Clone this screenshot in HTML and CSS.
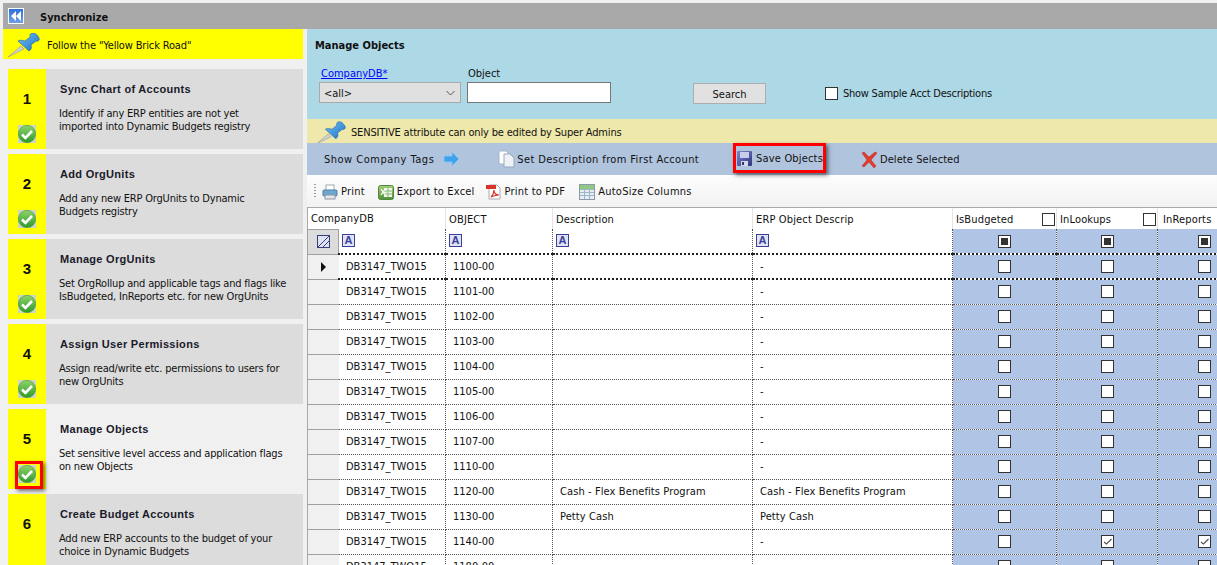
FILE: index.html
```html
<!DOCTYPE html>
<html lang="en">
<head>
<meta charset="utf-8">
<title>Synchronize</title>
<link rel="stylesheet" href="styles.css">
</head>
<body>
<svg class="defs" width="0" height="0" aria-hidden="true">
  <defs>
    <linearGradient id="gr" x1="0" y1="0" x2="0" y2="1"><stop offset="0" stop-color="#8fd46a"/><stop offset="1" stop-color="#2f9a2a"/></linearGradient>
    <linearGradient id="pinb" x1="0" y1="0" x2="1" y2="1"><stop offset="0" stop-color="#6fc3f5"/><stop offset="1" stop-color="#1d70c8"/></linearGradient>
    <linearGradient id="sv" x1="0" y1="0" x2="1" y2="1"><stop offset="0" stop-color="#7f86c8"/><stop offset="1" stop-color="#2c3584"/></linearGradient>
    <linearGradient id="xl" x1="0" y1="0" x2="0" y2="1"><stop offset="0" stop-color="#a6cf7e"/><stop offset="1" stop-color="#4e8f3a"/></linearGradient>
    <symbol id="check" viewBox="0 0 18 18">
      <rect width="18" height="18" fill="#c9d6c0"/>
      <circle cx="9" cy="9" r="8.6" fill="url(#gr)" stroke="#3b8f2e" stroke-width=".6"/>
      <path d="M4 9.500l3.400 3.400L14 6" fill="none" stroke="#fff" stroke-width="2.600"/>
    </symbol>
    <symbol id="pin" viewBox="0 0 32 24">
      <path d="M0 24L13 13l3 3z" fill="#d0d0d0" stroke="#8a8a8a" stroke-width=".5"/>
      <path d="M10 8l11 10c2-1 3-3 2-6l5-4c2 1 4-1 3-3s-3-5-6-5-3 2-3 4l-5 4c-3-1-6-1-7 0z" fill="url(#pinb)" stroke="#1b5fa8" stroke-width=".6"/>
    </symbol>
    <symbol id="tick" viewBox="0 0 11 11">
      <path d="M2 6l2.500 2L9.500 3" fill="none" stroke="#555" stroke-width="1.200"/>
    </symbol>
  </defs>
</svg>

<div class="app">
  <header class="titlebar">
    <span class="collapse"><svg width="12" height="10" viewBox="0 0 12 10"><path d="M6 0v10L1 5zM11 0v10L6 5z" fill="#fff"/></svg></span>
    <span class="title-text">Synchronize</span>
  </header>

  <div class="body-row">
    <aside class="sidebar">
      <div class="follow"><svg class="follow-pin" width="32" height="24"><use href="#pin"/></svg><span>Follow the "Yellow Brick Road"</span></div>
      <div class="steps">
        <section class="step">
          <div class="step-num"><b>1</b><svg class="ok" width="18" height="18"><use href="#check"/></svg></div>
          <div class="step-text"><h3>Sync Chart of Accounts</h3><p>Identify if any ERP entities are not yet<br>imported into Dynamic Budgets registry</p></div>
        </section>
        <section class="step">
          <div class="step-num"><b>2</b><svg class="ok" width="18" height="18"><use href="#check"/></svg></div>
          <div class="step-text"><h3>Add OrgUnits</h3><p>Add any new ERP OrgUnits to Dynamic<br>Budgets registry</p></div>
        </section>
        <section class="step">
          <div class="step-num"><b>3</b><svg class="ok" width="18" height="18"><use href="#check"/></svg></div>
          <div class="step-text"><h3>Manage OrgUnits</h3><p>Set OrgRollup and applicable tags and flags like<br>IsBudgeted, InReports etc. for new OrgUnits</p></div>
        </section>
        <section class="step">
          <div class="step-num"><b>4</b><svg class="ok" width="18" height="18"><use href="#check"/></svg></div>
          <div class="step-text"><h3>Assign User Permissions</h3><p>Assign read/write etc. permissions to users for<br>new OrgUnits</p></div>
        </section>
        <section class="step step-active">
          <div class="step-num"><b>5</b><svg class="ok" width="18" height="18"><use href="#check"/></svg><span class="redbox redbox-check"></span></div>
          <div class="step-text"><h3>Manage Objects</h3><p>Set sensitive level access and application flags<br>on new Objects</p></div>
        </section>
        <section class="step">
          <div class="step-num"><b>6</b></div>
          <div class="step-text"><h3>Create Budget Accounts</h3><p>Add new ERP accounts to the budget of your<br>choice in Dynamic Budgets</p></div>
        </section>
      </div>
    </aside>

    <main class="content">
      <div class="filters">
        <h2>Manage Objects</h2>
        <div class="filter-row">
          <div class="field field-db">
            <a class="link" href="#">CompanyDB*</a>
            <span class="select">&lt;all&gt;<svg width="9" height="6" viewBox="0 0 9 6"><path d="M.5 1L4.500 5 8.500 1" fill="none" stroke="#555" stroke-width="1"/></svg></span>
          </div>
          <div class="field field-obj">
            <label>Object</label>
            <span class="input"></span>
          </div>
          <button class="search" type="button">Search</button>
          <span class="sample"><span class="cb"></span><span class="sample-text">Show Sample Acct Descriptions</span></span>
        </div>
      </div>

      <div class="notice"><svg class="notice-pin" width="30" height="24"><use href="#pin"/></svg>SENSITIVE attribute can only be edited by Super Admins</div>

      <div class="actions">
        <span class="act act-tags">Show Company Tags<svg width="17" height="16" viewBox="0 0 17 16"><path d="M1 5h8V1l7 7-7 7v-4H1z" fill="#3fa2ec" stroke="#8cc8f2" stroke-width=".8"/></svg></span>
        <span class="act act-desc"><svg width="17" height="18" viewBox="0 0 17 18"><path d="M1 1h7l3 3v10H1z" fill="#fff" stroke="#a8b4c4"/><path d="M6 4h6l4 4v9H6z" fill="#eef2f7" stroke="#98a6b8"/></svg>Set Description from First Account</span>
        <span class="act act-save"><svg width="15" height="15" viewBox="0 0 15 15"><rect width="15" height="15" rx="1" fill="url(#sv)"/><rect x="3" y="1" width="9" height="6" fill="#c9cdea"/><rect x="4" y="10" width="7" height="5" fill="#d6d8e0"/><rect x="5" y="11" width="2" height="3" fill="#2c3584"/></svg>Save Objects<span class="redbox redbox-save"></span></span>
        <span class="act act-del"><svg width="17" height="17" viewBox="0 0 17 17"><path d="M1 2l2-1 5 5 6-5 2 1-6 7 5 6-2 2-5-6-5 5-2-1 5-6z" fill="#e23b2e" stroke="#b32a20" stroke-width=".5"/></svg>Delete Selected</span>
      </div>

      <div class="tools">
        <span class="grip"></span>
        <span class="tool tool-print"><svg width="16" height="16" viewBox="0 0 16 16"><rect x="4" y="1" width="8" height="6" fill="#fff" stroke="#9aa"/><rect x="1" y="6" width="14" height="6" rx="1" fill="#6ea6d2" stroke="#4a7ea8"/><rect x="3" y="11" width="10" height="4" fill="#e4e8ec" stroke="#8a969f"/></svg>Print</span>
        <span class="tool tool-excel"><svg width="16" height="16" viewBox="0 0 16 16"><rect x=".5" y="1.500" width="15" height="14" rx="2" fill="url(#xl)" stroke="#4f8a3c"/><rect x="6" y="4" width="8" height="9" fill="#eef6e6"/><path d="M6 7h8M6 10h8M10 4v9" stroke="#8ab878"/><path d="M3 5l4 6M7 5l-4 6" stroke="#fff" stroke-width="1.300"/></svg>Export to Excel</span>
        <span class="tool tool-pdf"><svg width="16" height="16" viewBox="0 0 16 16"><path d="M3 1h8l3 3v11H3z" fill="#fff" stroke="#aaa"/><rect x="0" y="1" width="10" height="4" fill="#d8322a"/><path d="M5 13c2-2 3-5 3-7 0 3 2 5 5 5-3 0-6 1-8 2z" fill="none" stroke="#d8322a" stroke-width="1.200"/></svg>Print to PDF</span>
        <span class="tool tool-auto"><svg width="16" height="16" viewBox="0 0 16 16"><rect x=".5" y=".5" width="15" height="15" fill="#e6eef4" stroke="#8a9aa8"/><rect x="1" y="1" width="14" height="4" fill="#8ccb78"/><path d="M5.500 1v14M10.500 1v14M1 5.500h14M1 8.500h14M1 11.500h14" stroke="#9fb6c6"/></svg>AutoSize Columns</span>
      </div>

      <div class="grid-wrap">
        <table class="grid">
          <colgroup>
            <col class="c-sel"><col class="c-db"><col class="c-obj"><col class="c-desc"><col class="c-erp"><col class="c-bud"><col class="c-look"><col class="c-rep">
          </colgroup>
          <thead>
            <tr class="head">
              <th colspan="2" class="h-first">CompanyDB</th>
              <th>OBJECT</th>
              <th>Description</th>
              <th>ERP Object Descrip</th>
              <th><span class="h-flex">IsBudgeted<span class="cb"></span></span></th>
              <th><span class="h-flex">InLookups<span class="cb"></span></span></th>
              <th class="h-last">InReports</th>
            </tr>
            <tr class="filter">
              <td class="sel sel-corner"><svg width="13" height="13" viewBox="0 0 13 13"><rect x=".5" y=".5" width="12" height="12" fill="#dfe2f0" stroke="#3a3f7a"/><path d="M1 12L12 1M6 12l6-6" stroke="#3a3f7a"/></svg></td>
              <td><span class="fa">A</span></td>
              <td><span class="fa">A</span></td>
              <td><span class="fa">A</span></td>
              <td><span class="fa">A</span></td>
              <td class="chk"><span class="cb cb-mixed"></span></td>
              <td class="chk"><span class="cb cb-mixed"></span></td>
              <td class="chk"><span class="cb cb-mixed"></span></td>
            </tr>
          </thead>
          <tbody>
            <tr class="current"><td class="sel"><span class="arrow"></span></td><td class="db">DB3147_TWO15</td><td class="ob">1100-00</td><td></td><td class="erp">-</td><td class="chk"><span class="cb"></span></td><td class="chk"><span class="cb"></span></td><td class="chk"><span class="cb"></span></td></tr>
            <tr><td class="sel"></td><td class="db">DB3147_TWO15</td><td class="ob">1101-00</td><td></td><td class="erp">-</td><td class="chk"><span class="cb"></span></td><td class="chk"><span class="cb"></span></td><td class="chk"><span class="cb"></span></td></tr>
            <tr><td class="sel"></td><td class="db">DB3147_TWO15</td><td class="ob">1102-00</td><td></td><td class="erp">-</td><td class="chk"><span class="cb"></span></td><td class="chk"><span class="cb"></span></td><td class="chk"><span class="cb"></span></td></tr>
            <tr><td class="sel"></td><td class="db">DB3147_TWO15</td><td class="ob">1103-00</td><td></td><td class="erp">-</td><td class="chk"><span class="cb"></span></td><td class="chk"><span class="cb"></span></td><td class="chk"><span class="cb"></span></td></tr>
            <tr><td class="sel"></td><td class="db">DB3147_TWO15</td><td class="ob">1104-00</td><td></td><td class="erp">-</td><td class="chk"><span class="cb"></span></td><td class="chk"><span class="cb"></span></td><td class="chk"><span class="cb"></span></td></tr>
            <tr><td class="sel"></td><td class="db">DB3147_TWO15</td><td class="ob">1105-00</td><td></td><td class="erp">-</td><td class="chk"><span class="cb"></span></td><td class="chk"><span class="cb"></span></td><td class="chk"><span class="cb"></span></td></tr>
            <tr><td class="sel"></td><td class="db">DB3147_TWO15</td><td class="ob">1106-00</td><td></td><td class="erp">-</td><td class="chk"><span class="cb"></span></td><td class="chk"><span class="cb"></span></td><td class="chk"><span class="cb"></span></td></tr>
            <tr><td class="sel"></td><td class="db">DB3147_TWO15</td><td class="ob">1107-00</td><td></td><td class="erp">-</td><td class="chk"><span class="cb"></span></td><td class="chk"><span class="cb"></span></td><td class="chk"><span class="cb"></span></td></tr>
            <tr><td class="sel"></td><td class="db">DB3147_TWO15</td><td class="ob">1110-00</td><td></td><td class="erp">-</td><td class="chk"><span class="cb"></span></td><td class="chk"><span class="cb"></span></td><td class="chk"><span class="cb"></span></td></tr>
            <tr><td class="sel"></td><td class="db">DB3147_TWO15</td><td class="ob">1120-00</td><td class="ds">Cash - Flex Benefits Program</td><td class="erp">Cash - Flex Benefits Program</td><td class="chk"><span class="cb"></span></td><td class="chk"><span class="cb"></span></td><td class="chk"><span class="cb"></span></td></tr>
            <tr><td class="sel"></td><td class="db">DB3147_TWO15</td><td class="ob">1130-00</td><td class="ds">Petty Cash</td><td class="erp">Petty Cash</td><td class="chk"><span class="cb"></span></td><td class="chk"><span class="cb"></span></td><td class="chk"><span class="cb"></span></td></tr>
            <tr><td class="sel"></td><td class="db">DB3147_TWO15</td><td class="ob">1140-00</td><td></td><td class="erp">-</td><td class="chk"><span class="cb"></span></td><td class="chk"><span class="cb cb-on"><svg width="11" height="11"><use href="#tick"/></svg></span></td><td class="chk"><span class="cb cb-on"><svg width="11" height="11"><use href="#tick"/></svg></span></td></tr>
            <tr><td class="sel"></td><td class="db">DB3147_TWO15</td><td class="ob">1180-00</td><td></td><td class="erp">-</td><td class="chk"><span class="cb"></span></td><td class="chk"><span class="cb"></span></td><td class="chk"><span class="cb"></span></td></tr>
          </tbody>
        </table>
      </div>
    </main>
  </div>
</div>
</body>
</html>
```

FILE: styles.css
```css
* { box-sizing: border-box; }
html, body { margin: 0; padding: 0; height: 565px; overflow: hidden; }
body {
  background: #f0f0f0;
  font-family: "DejaVu Sans Condensed", "DejaVu Sans", sans-serif;
  font-stretch: condensed;
  font-size: 11px;
  color: #111;
}
.defs { position: absolute; }
.app { padding: 3px 0 0 3px; height: 565px; display: flex; flex-direction: column; }

.titlebar { height: 26px; background: #a9a9a9; display: flex; align-items: center; padding-left: 5px; flex: none; }
.collapse { width: 16px; height: 16px; border: 1px solid #fff; background: linear-gradient(#2f6fd8, #6f9fe8); display: flex; align-items: center; justify-content: center; }
.title-text { margin-left: 16px; padding-top: 2px; font-weight: 700; font-size: 11px; color: #111; }

.body-row { display: flex; flex: 1; min-height: 0; }
.sidebar { width: 304px; flex: none; overflow: hidden; }
.follow { width: 300px; height: 30px; background: #ff0; display: flex; align-items: center; padding: 2px 0 0 5px; font-size: 11px; letter-spacing: -.15px; }
.follow-pin { margin: 0 7px 0 0; flex: none; }
.steps { display: flex; flex-direction: column; gap: 5px; padding: 10px 0 0 5px; width: 300px; }
.step { height: 80px; flex: none; background: #dcdcdc; display: flex; }
.step-active { background: #f0f0f0; }
.step-num { width: 38px; background: #ff0; position: relative; flex: none; text-align: center; padding-top: 21px; }
.step-num b { font: 700 15px/18px "Liberation Sans", sans-serif; }
.ok { position: absolute; left: 10px; top: 56px; }
.step-text { padding: 13px 0 0 13px; }
.step-text h3 { margin: 0 0 0 1px; font: 700 11px/14px "Liberation Sans", sans-serif; letter-spacing: .3px; color: #1a1a2a; }
.step-text p { margin: 11px 0 0; font-size: 11px; line-height: 13px; color: #111; letter-spacing: -.2px; }
.redbox { position: absolute; border: 3px solid #f00; box-shadow: 2px 2px 4px rgba(0,0,0,.55); }
.redbox-check { left: 7px; top: 52px; width: 28px; height: 28px; }
.redbox-save { left: 0; top: 0; width: 93px; height: 30px; }

.content { flex: 1; min-width: 0; display: flex; flex-direction: column; }
.filters { height: 90px; background: #add8e6; padding: 10px 0 0 8px; flex: none; }
.filters h2 { margin: 0; font-size: 11px; font-weight: 700; line-height: 14px; color: #111; }
.filter-row { display: flex; align-items: flex-start; margin-top: 13px; }
.field { display: flex; flex-direction: column; }
.field-db { width: 142px; margin-left: 4px; }
.field-obj { width: 144px; margin-left: 6px; }
.link { color: #00f; text-decoration: underline; line-height: 15px; margin-left: 2px; }
.field-obj label { line-height: 15px; margin-left: 1px; }
.select { height: 21px; margin-top: 1px; background: #e0e0e0; border: 1px solid #a9a9a9; display: flex; align-items: center; justify-content: space-between; padding: 1px 5px 0 4px; }
.input { display: block; height: 21px; margin-top: 1px; background: #fff; border: 1px solid #777; }
.search { width: 73px; height: 21px; margin: 17px 0 0 82px; background: #e1e1e1; border: 1px solid #adadad; font: inherit; color: #111; padding: 1px 0 0; }
.sample { display: flex; align-items: center; margin: 20px 0 0 59px; gap: 5px; }
.sample-text { padding-top: 1px; letter-spacing: -.25px; }

.notice { height: 24px; background: #eee8aa; display: flex; align-items: center; padding: 2px 0 0 9px; flex: none; overflow: hidden; letter-spacing: -.17px; }
.notice-pin { margin-right: 5px; margin-top: 1px; flex: none; }

.actions { height: 32px; background: #b0c4de; display: flex; align-items: center; flex: none; }
.act { display: flex; align-items: center; position: relative; white-space: nowrap; }
.act-tags { margin-left: 17px; gap: 9px; letter-spacing: .5px; }
.act-desc { margin-left: 38px; gap: 2px; letter-spacing: .38px; }
.act-save { margin-left: 34px; gap: 4px; height: 30px; align-self: flex-start; padding-left: 4px; letter-spacing: .17px; }
.act-del { margin-left: 38px; gap: 2px; letter-spacing: .07px; }

.tools { height: 33px; background: linear-gradient(#fdfdfd, #f2f2f2); display: flex; align-items: center; flex: none; border-bottom: 1px solid #a9a9a9; padding-top: 1px; }
.grip { width: 2px; height: 15px; margin-left: 7px; background-image: linear-gradient(#999 50%, transparent 50%); background-size: 2px 3px; }
.tool { display: flex; align-items: center; gap: 3px; white-space: nowrap; letter-spacing: .2px; }
.tool-print { margin-left: 6px; }
.tool-excel { margin-left: 13px; }
.tool-pdf { margin-left: 11px; }
.tool-auto { margin-left: 14px; letter-spacing: .25px; }

.grid-wrap { flex: 1; min-height: 0; overflow: hidden; background: #fff; }
.grid { table-layout: fixed; border-collapse: collapse; width: 944px; background: #fff; border-left: 1px solid #a9a9a9; }
.c-sel { width: 31px; } .c-db { width: 107px; } .c-obj { width: 107px; } .c-desc { width: 200px; }
.c-erp { width: 200px; } .c-bud { width: 104px; } .c-look { width: 101px; } .c-rep { width: 94px; }
.grid th, .grid td { padding: 0; height: 25px; border-right: 1px dotted #555; border-bottom: 1px dotted #555; white-space: nowrap; overflow: hidden; font-weight: 400; text-align: left; }
.head th { height: 21px; border-bottom: 0; border-right: 1px solid #e4e4e4; padding: 1px 0 0 3px; letter-spacing: .15px; }
.grid .h-first { padding-left: 3px; }
.grid .h-last { padding-left: 5px; }
.h-flex { display: flex; justify-content: space-between; align-items: center; padding-right: 1px; }
.filter td { height: 25px; border-bottom: 2px dotted #222; vertical-align: top; padding-top: 5px; }
.fa { display: inline-block; width: 13px; height: 13px; border: 1px solid #3a3f9a; background: #dfe3f4; color: #3a3f9a; font: 700 11px/11px "Liberation Sans", sans-serif; text-align: center; margin-left: 3px; }
.grid td.sel { background: #f0f0f0; border-right: 1px solid #f0f0f0; border-bottom: 1px solid #a0a0a0; text-align: center; vertical-align: middle; padding: 0; }
.grid td.sel-corner { background: #dcdcdc; border: 1px solid #a0a0a0; padding: 0; line-height: 0; }
.arrow { display: inline-block; border-left: 5px solid #111; border-top: 5px solid transparent; border-bottom: 5px solid transparent; vertical-align: middle; }
.current td { border-bottom: 2px dotted #222; }
.grid td.db { padding: 0 0 0 7px; }
.grid td.ob { padding: 0 0 0 7px; }
.grid td.ds { padding: 0 0 0 7px; letter-spacing: .1px; }
.grid td.erp { padding: 0 0 0 7px; letter-spacing: .1px; }
.grid td.chk { background: #b0c4e6; text-align: center; vertical-align: middle; line-height: 0; padding: 0; }
.cb { display: inline-block; width: 13px; height: 13px; border: 1px solid #333; background: #fff; position: relative; flex: none; vertical-align: middle; }
.cb-mixed::after { content: ""; position: absolute; left: 2px; top: 2px; width: 7px; height: 7px; background: #333; }
.cb-on svg { display: block; }
```
